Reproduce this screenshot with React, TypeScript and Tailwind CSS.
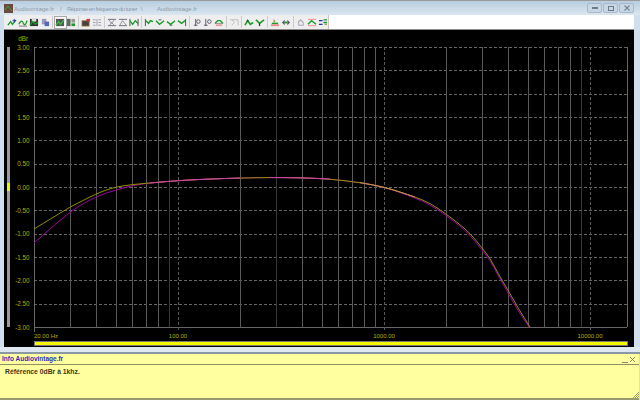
import React from "react";

const G = "#1f9a2a";
const K = "#333333";

type Ico = React.ReactNode;

const zig = (c = G) => <polyline points="1,8 4,4 6,7 10,2" fill="none" stroke={c} strokeWidth="1.5" />;
const wave = (c = G) => <path d="M1 7 C3 2 5 3 6 6 S9 7 10 3" fill="none" stroke={c} strokeWidth="1.5" />;

const icons: Ico[] = [
  <>{zig()}<path d="M8 1v4M6 3h4" stroke="#2233aa" strokeWidth="1" /></>,
  <>{wave()}<path d="M1 9h9" stroke="#555" strokeWidth="0.8" /></>,
  <><rect x="1" y="1" width="9" height="8" fill="#333" /><rect x="3" y="1" width="5" height="3" fill="#dddddd" /><path d="M1 8 L4 4 L7 7 L10 5" stroke={G} strokeWidth="1.4" fill="none" /></>,
  <><rect x="2" y="1" width="5" height="6" fill="#9a9ab8" /><rect x="5" y="4" width="5" height="5" fill="#5566bb" /></>,
  <><rect x="1" y="1" width="9" height="8" fill="#555" />{zig("#35c040")}</>,
  <><rect x="1" y="1" width="4" height="8" fill="#666" /><rect x="6" y="1" width="4" height="4" fill="#999" /><rect x="6" y="6" width="4" height="3" fill={G} /><path d="M1 7 L4 4" stroke={G} /></>,
  <><rect x="1" y="3" width="8" height="6" fill="#444" stroke="#aa8833" strokeWidth="0.8" /><rect x="6" y="1" width="4" height="3" fill="#cc3344" /></>,
  <><path d="M1 2h3M1 5h3M1 8h3M7 2h3M7 5h3M7 8h3M5.500 1v8" stroke="#99a" strokeWidth="1" /></>,
  <><path d="M1 1.500h9M1 8.500h9" stroke="#667" strokeWidth="1" /><path d="M2 2 L5 6 L8 2 M3 8 L5 5 L8 8" stroke="#889" fill="none" /></>,
  <><path d="M1 1.500h9M1 8.500h9" stroke="#667" strokeWidth="1" /><path d="M2 8 L5 3 L9 8" stroke="#889" fill="none" /></>,
  <><path d="M1 1v8M10 1v8" stroke="#445" strokeWidth="1" /><path d="M1 3 L4 7 L7 3 L10 6" stroke={G} strokeWidth="1.5" fill="none" /></>,
  <><path d="M1.500 1v8" stroke="#445" /><path d="M2 3 L5 6 L7 3 L10 4" stroke={G} strokeWidth="1.6" fill="none" /></>,
  <><path d="M1 3 L5 7 L10 3" stroke={G} strokeWidth="1.6" fill="none" /><path d="M4 2h3" stroke="#445" /></>,
  <><path d="M1 4 L5 7 L10 3" stroke={G} strokeWidth="1.6" fill="none" /><path d="M4 8h3" stroke="#445" /></>,
  <><path d="M1 3 L5 6 L9 3" stroke={G} strokeWidth="1.6" fill="none" /><path d="M9.500 1v8" stroke="#445" /></>,
  <><path d="M4 1v8M2 8h4" stroke="#556" /><circle cx="7" cy="4" r="2" fill="none" stroke="#556" /></>,
  <><path d="M3 1v8M1 8h4" stroke="#556" /><circle cx="7" cy="4" r="2" fill="none" stroke="#556" /></>,
  <><path d="M1 6h9" stroke="#888" /><path d="M1 6 L4 3 L7 3 L10 6" stroke={G} strokeWidth="1.4" fill="none" /><rect x="2" y="7" width="7" height="2" fill="#e8a0a0" /></>,
  <><path d="M1 2h9v6" stroke="#bbb" fill="none" /><path d="M3 2l3 3-3 3" stroke="#bbb" fill="none" /></>,
  <><path d="M1 8 L4 3 L7 7 L10 5" stroke={G} strokeWidth="1.8" fill="none" /><circle cx="4" cy="3" r="1" fill={K} /></>,
  <><path d="M1 2 L5 6 L10 2" stroke={G} strokeWidth="1.8" fill="none" /><path d="M5 6v3" stroke={K} strokeWidth="1.4" /></>,
  <><path d="M4 1l2 3-2 1z" fill="#998822" /><path d="M2 6h7" stroke={G} strokeWidth="1.6" /><rect x="1" y="7" width="9" height="2" fill="#e88" /></>,
  <><path d="M1 5l3-3v6z M10 5l-3-3v6z" fill="#556" /><rect x="4" y="4" width="3" height="2" fill={G} /></>,
  <><path d="M2 5l3-3 3 3M3 5v3h5V5" stroke="#aab" fill="none" strokeWidth="1.2" /></>,
  <><path d="M1 1.500h9M1 8.500h9" stroke="#e88" strokeWidth="1" /><path d="M1 7 L5 3 L10 7" stroke={G} strokeWidth="1.5" fill="none" /></>,
  <><path d="M1 3h4M1 7h4" stroke="#2233aa" strokeWidth="1.4" /><path d="M6 2h4M6 5h4" stroke={G} strokeWidth="1.4" /><path d="M7 7h3" stroke="#996" strokeWidth="1.4" /></>,
];

function Btn({ icon, pressed }: { icon: Ico; pressed?: boolean }) {
  return (
    <div className={`w-[11px] h-[11px] flex items-center justify-center ${pressed ? "bg-[#fafafa] outline outline-1 outline-[#a8a8a8]" : ""}`}>
      <svg width="10" height="9" viewBox="0 0 11 10">{icon}</svg>
    </div>
  );
}

const Sep = () => (
  <div className="w-[4px] h-[12px] flex justify-center">
    <div className="w-px h-full bg-[#cccccc]" />
  </div>
);

const groups = [[0, 1, 2, 3], [4, 5], [6, 7], [8, 9, 10], [11, 12, 13, 14], [15, 16, 17], [18], [19, 20], [21, 22], [23, 24, 25]];

const X0 = 178;
const D = 206;
const fx = (f: number) => X0 + D * Math.log10(f / 100);

const freqs: number[] = [];
for (const m of [10, 100, 1000]) for (let i = 1; i <= 9; i++) if (m * i >= 30) freqs.push(m * i);
freqs.push(10000);

const dim = new Set([90, 300, 9000]);
const major = new Set([100, 1000, 10000]);

type P = [number, number];

function smooth(pts: P[]) {
  let d = `M${pts[0][0]} ${pts[0][1]}`;
  for (let i = 1; i < pts.length - 1; i++) {
    const mx = (pts[i][0] + pts[i + 1][0]) / 2;
    const my = (pts[i][1] + pts[i + 1][1]) / 2;
    d += ` Q${pts[i][0]} ${pts[i][1]} ${mx} ${my}`;
  }
  const l = pts[pts.length - 1];
  return d + ` L${l[0]} ${l[1]}`;
}

const yellow: P[] = [[34, 229], [52, 218], [70, 207], [84, 200], [96, 194], [106, 190], [116, 187], [132, 184.5], [150, 183], [178, 180.5], [210, 179], [240, 178], [270, 177.5], [300, 177.7], [330, 179], [360, 182.5], [384, 187], [400, 192], [415, 197], [430, 203], [446, 214], [458, 223], [470, 233], [482, 248], [490, 258], [500, 277], [508, 290], [518, 308], [530, 327]];
const purple: P[] = [[34, 243], [52, 227], [70, 212], [84, 203], [96, 197], [106, 193], [116, 190], [132, 185.5], [150, 183], [178, 180.5], [210, 179], [240, 178], [270, 177.5], [300, 177.7], [330, 179], [360, 182.5], [384, 187], [400, 192.5], [415, 198], [430, 204.5], [446, 215.5], [458, 224.5], [470, 235], [482, 250], [490, 260], [500, 279], [507, 291], [517, 309], [529, 327]];

const yLabels = ["3.00", "2.50", "2.00", "1.50", "1.00", "0.50", "0.00", "-0.50", "-1.00", "-1.50", "-2.00", "-2.50", "-3.00"];
const F = "Liberation Sans, sans-serif";

function Chart() {
  return (
    <svg width="630" height="317" viewBox="4 30 630 317" className="block">
      <rect x="7" y="47" width="3" height="280" fill="#9a9a9a" />
      <rect x="7" y="183" width="3" height="8" fill="#f4f400" />
      {yLabels.map((t, i) => {
        const y = 47 + (i * 280) / 12;
        const yy = Math.round(y) + 0.5;
        return (
          <g key={t}>
            <line x1="34" x2="627" y1={yy} y2={yy} stroke="#666666" strokeDasharray={i === 12 ? undefined : "3 2"} />
            <text x="29.500" y={y + 2.500} textAnchor="end" fontSize="6.300" fill="#b0b000" fontFamily={F}>{t}</text>
          </g>
        );
      })}
      <text x="28" y="41" textAnchor="end" fontSize="6.300" fill="#b0b000" fontFamily={F}>dBr</text>
      <line x1="34.500" x2="34.500" y1="47" y2="332" stroke="#6a6a6a" />
      <line x1="627.500" x2="627.500" y1="47" y2="327" stroke="#666666" />
      {freqs.map((f) => {
        const x = Math.round(fx(f)) + 0.5;
        return (
          <line
            key={f}
            x1={x}
            x2={x}
            y1="47"
            y2={major.has(f) ? 332 : 327}
            stroke={dim.has(f) ? "#383838" : "#585858"}
            strokeDasharray={major.has(f) ? "3 2" : undefined}
          />
        );
      })}
      <path d={smooth(purple)} fill="none" stroke="#a000a0" strokeWidth="1" />
      <path d={smooth(yellow)} fill="none" stroke="#8f8f00" strokeWidth="1" />
      <path d={smooth(yellow.slice(8, 12))} fill="none" stroke="#d040b0" strokeWidth="1" />
      <path d={smooth(yellow.slice(12, 15))} fill="none" stroke="#d040b0" strokeWidth="1" />
      <path d={smooth(yellow.slice(15, 19))} fill="none" stroke="#c88860" strokeWidth="1" />
      {([["20.00 Hz", 34, "start"], ["100.00", 178, "middle"], ["1000.00", 384, "middle"], ["10000.00", 590, "middle"]] as const).map(([t, x, a]) => (
        <text key={t} x={x} y="338" textAnchor={a} fontSize="6" fill="#b0b000" fontFamily={F}>{t}</text>
      ))}
      <rect x="34.500" y="341.500" width="593" height="4" fill="#f6f600" stroke="#777" strokeWidth="1" />
    </svg>
  );
}

function WinBtn({ children }: { children: React.ReactNode }) {
  return (
    <div className="w-[15px] h-[10px] rounded-[2px] border border-[#a8b8c8] bg-[#c7d6e4] flex items-center justify-center">{children}</div>
  );
}

export default function App() {
  return (
    <div className="w-[640px] h-[400px] overflow-hidden flex flex-col bg-[#cfdfee] font-['Liberation_Sans',sans-serif]">
      <div className="h-[15px] border-t border-[#9a9a9a] bg-gradient-to-b from-[#b7cde0] to-[#dbe6ef] flex items-center pl-[4px] pr-[6px]">
        <svg width="9" height="9" viewBox="0 0 9 9" className="mr-[1px]">
          <rect width="9" height="9" fill="#6a4a3a" />
          <path d="M1 6 L4 2 L8 7" stroke="#3fa044" fill="none" />
        </svg>
        <div className="flex text-[6px] text-[#8d9aa6] leading-none whitespace-pre mt-[1px]">
          <span className="w-[46px]">Audiovintage.fr</span>
          <span className="w-[7px]">/</span>
          <span className="w-[74px] tracking-[-0.5px]">Réponse en fréquence du tuner</span>
          <span className="w-[16px]">\</span>
          <span>Audiovintage.fr</span>
        </div>
        <div className="ml-auto flex gap-[1px]">
          <WinBtn><div className="w-[6px] h-[2px] bg-[#6d7a88]" /></WinBtn>
          <WinBtn><div className="w-[6px] h-[5px] border border-[#6d7a88]" /></WinBtn>
          <WinBtn>
            <svg width="6" height="6" viewBox="0 0 6 6"><path d="M0.500 0.500l5 5M5.500 0.500l-5 5" stroke="#7a8896" strokeWidth="1.200" /></svg>
          </WinBtn>
        </div>
      </div>
      <div className="h-[15px] ml-[4px] mr-[6px] flex border-b border-[#8c8c8c] bg-white">
        <div className="w-[325px] bg-[#eeeeee] border-r border-[#c8c8c8] flex items-center pl-[3px]">
          {groups.map((g, i) => (
            <React.Fragment key={i}>
              {i > 0 && <Sep />}
              {g.map((n) => <Btn key={n} icon={icons[n]} pressed={n === 4} />)}
            </React.Fragment>
          ))}
        </div>
      </div>
      <div className="h-[317px] ml-[4px] mr-[6px] bg-black">
        <Chart />
      </div>
      <div className="h-[7px] border-b-2 border-[#8a98a4] bg-[#dfe8f0]" />
      <div className="flex-1 bg-[#ffff9f] border-b-2 border-[#9a9a70] flex flex-col mr-[1px]">
        <div className="h-[11px] border-b border-[#8f8f60] flex items-center pl-[2px] pr-[3px]">
          <span className="text-[6.500px] font-bold text-[#3030b0] leading-none">Info Audiovintage.fr</span>
          <svg width="14" height="7" viewBox="0 0 14 7" className="ml-auto">
            <path d="M0 6.500h6M8 1l5 5M13 1l-5 5" stroke="#8a8a70" fill="none" />
          </svg>
        </div>
        <div className="pl-[5px] pt-[4px] text-[6.800px] font-bold leading-none text-[#3a3a20]">Référence 0dBr à 1khz.</div>
        <div className="mt-auto flex justify-end">
          <svg width="7" height="7" viewBox="0 0 7 7"><path d="M1 7l6-6M3 7l4-4M5 7l2-2" stroke="#9a9a70" /></svg>
        </div>
      </div>
    </div>
  );
}
